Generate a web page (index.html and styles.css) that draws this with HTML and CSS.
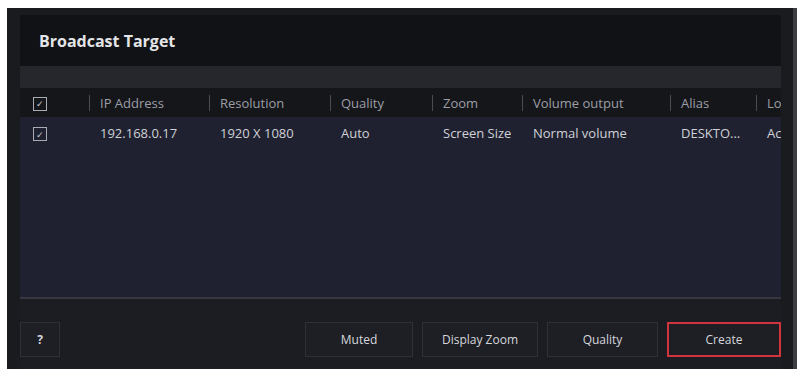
FILE: index.html
```html
<!DOCTYPE html>
<html lang="en">
<head>
  <meta charset="UTF-8">
  <title>Broadcast Target</title>
  <link rel="stylesheet" href="styles.css">
</head>
<body>

<div class="frame">
  <div class="title-bar">Broadcast Target</div>
  <div class="strip"></div>

  <div class="table">
    <div class="row head">
      <div class="cell check"><span class="box">&#10003;</span></div>
      <div class="cell">IP Address</div>
      <div class="cell">Resolution</div>
      <div class="cell">Quality</div>
      <div class="cell">Zoom</div>
      <div class="cell">Volume output</div>
      <div class="cell">Alias</div>
      <div class="cell">Lo</div>
    </div>
    <div class="row data">
      <div class="cell check"><span class="box">&#10003;</span></div>
      <div class="cell">192.168.0.17</div>
      <div class="cell">1920 X 1080</div>
      <div class="cell">Auto</div>
      <div class="cell">Screen Size</div>
      <div class="cell">Normal volume</div>
      <div class="cell">DESKTO...</div>
      <div class="cell">Ac</div>
    </div>
  </div>

  <div class="footer">
    <button class="btn help">?</button>
    <div class="actions">
      <button class="btn muted">Muted</button>
      <button class="btn zoom">Display Zoom</button>
      <button class="btn quality">Quality</button>
      <button class="btn create">Create</button>
    </div>
  </div>
</div>

</body>
</html>
```

FILE: styles.css
```css
body {
  margin: 0;
  background: #ffffff;
  font-family: "Open Sans", "Noto Sans", sans-serif;
}
.frame {
  margin: 8px 2px 0 7px;
  height: 361px;
  box-sizing: border-box;
  padding: 7px 12px 0 13px;
  background: #1a1b1f;
  border-right: 4px solid #3c3e43;
  display: flex;
  flex-direction: column;
  overflow: hidden;
}
.title-bar {
  height: 51px;
  flex: none;
  display: flex;
  align-items: center;
  padding-left: 19px;
  background: #111215;
  color: #e4e5e8;
  font-size: 16px;
  font-weight: 700;
}
.strip {
  height: 22px;
  flex: none;
  background: #25272c;
}
.table {
  height: 209px;
  flex: none;
  background: #1f2130;
  border-bottom: 2px solid #363841;
  overflow: hidden;
}
.row {
  display: grid;
  grid-template-columns: 69px 120px 121px 102px 90px 148px 86px 60px;
  align-items: center;
  font-size: 13px;
  white-space: nowrap;
}
.row.head {
  height: 29px;
  background: #15161a;
  color: #9c9ea6;
}
.row.data {
  height: 32px;
  color: #cfd1d7;
}
.cell {
  padding-left: 11px;
  line-height: 16px;
}
.row.head .cell + .cell {
  border-left: 1px solid #4a4c52;
  padding-left: 10px;
}
.cell.check {
  padding-left: 13px;
}
.box {
  display: inline-flex;
  width: 12px;
  height: 12px;
  border: 1px solid #a9abb2;
  align-items: center;
  justify-content: center;
  color: #c9cbd1;
  font-size: 9px;
  line-height: 1;
  vertical-align: middle;
}
.footer {
  flex: 1;
  display: flex;
  align-items: flex-start;
  justify-content: space-between;
  padding-top: 23px;
  background: #1c1d22;
}
.actions {
  display: flex;
  gap: 9px;
}
.btn {
  height: 35px;
  background: #1e1f25;
  border: 1px solid #2e3036;
  color: #d6d7dc;
  font-family: inherit;
  font-size: 12px;
  font-weight: 400;
}
.btn.help {
  width: 40px;
  font-weight: 700;
}
.btn.muted {
  width: 108px;
}
.btn.zoom {
  width: 116px;
}
.btn.quality {
  width: 111px;
}
.btn.create {
  width: 114px;
  border: 2px solid #d0353e;
}
```
